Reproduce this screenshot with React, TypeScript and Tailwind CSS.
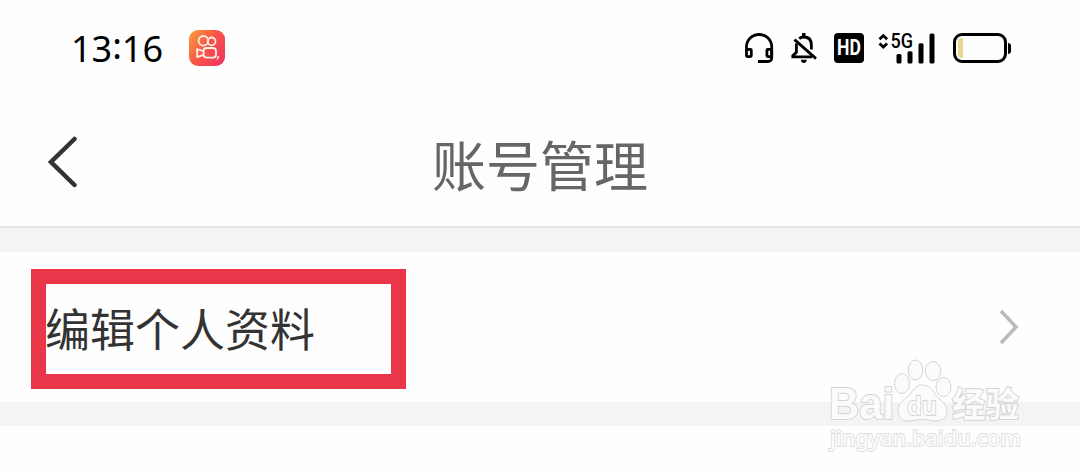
function AppBadge() {
  return (
    <svg className="h-9 w-9" viewBox="0 0 36 36" fill="none">
      <defs>
        <linearGradient id="badge" x1="0" y1="0.1" x2="1" y2="0.8">
          <stop offset="0" stopColor="#f99a3c" />
          <stop offset="0.5" stopColor="#fa5548" />
          <stop offset="1" stopColor="#f0365c" />
        </linearGradient>
      </defs>
      <rect width="36" height="36" rx="9" fill="url(#badge)" />
      <g stroke="#fff0e6" strokeWidth="1.8">
        <circle cx="14.4" cy="10.8" r="4.8" />
        <circle cx="22.6" cy="11.4" r="3.9" />
        <rect x="14.6" y="18" width="12.4" height="9.6" rx="3" />
        <path d="M14 21l-5.800-2v8.200l5.800-2" strokeLinejoin="round" />
      </g>
      <path d="M27.800 26.800h1.800l-1.400 3" stroke="#ffe3dc" strokeWidth="1.2" />
    </svg>
  );
}

function Headset() {
  return (
    <svg className="h-[30px] w-[29px]" viewBox="0 0 29 30" fill="none" stroke="#000" strokeWidth="2.8">
      <path d="M1.500 18v-4.200a12.600 12.300 0 0 1 25.200 0V24.500q0 4-4 4H13" />
      <rect x="1.500" y="16.400" width="4.800" height="7.200" rx="1" />
      <rect x="21.900" y="16.400" width="4.800" height="7.200" rx="1" />
    </svg>
  );
}

function BellOff() {
  return (
    <svg className="h-[30px] w-[26px]" viewBox="0 0 26 30" fill="none" stroke="#000" strokeWidth="2.8">
      <path d="M8.200 5.600q2-1.600 4.600-1.600 7.600 0 7.600 8v4.600" />
      <path d="M5.400 10.500v8.800L1.800 22.600v1.200H21" />
      <path d="M3.500 6.600L25 25.600" />
      <path d="M12.800 0v4" strokeWidth="3.4" />
      <path d="M9.800 26.800h6q-.5 3.200-3 3.200t-3-3.200z" fill="#000" stroke="none" />
    </svg>
  );
}

function Signal() {
  return (
    <svg className="h-[31px] w-[58px] overflow-visible" viewBox="0 0 58 31" fill="none">
      <path d="M1.500 6.200l3.800-3.600 3.800 3.600M1.500 10.400l3.800 3.600 3.800-3.600" stroke="#000" strokeWidth="2.8" />
      <text
        x="12.5"
        y="15"
        textLength="22.5"
        lengthAdjust="spacingAndGlyphs"
        className="font-['Roboto'] text-[20px] font-medium"
        fill="#000"
      >
        5G
      </text>
      <rect x="18.500" y="21" width="5" height="9.500" rx="1.500" fill="#000" />
      <rect x="29.500" y="18.300" width="5" height="12.200" rx="1.500" fill="#000" />
      <rect x="40.500" y="10.300" width="5" height="20.200" rx="1.500" fill="#000" />
      <rect x="51.500" y="0.500" width="5" height="30" rx="1.500" fill="#000" />
    </svg>
  );
}

function Battery() {
  return (
    <div className="flex items-center">
      <div className="h-[30px] w-[54px] rounded-[9px] border-3 border-black p-[2px]">
        <div className="h-full w-[5px] rounded-l-[4px] rounded-r-[1px] bg-[#ecd68c]" />
      </div>
      <div className="ml-px h-[11px] w-[3px] rounded-r-sm bg-black" />
    </div>
  );
}

function Watermark() {
  return (
    <svg
      className="absolute left-[820px] top-[350px] h-[110px] w-[210px]"
      viewBox="0 0 210 110"
      fill="#fbfbfb"
      stroke="#d4d4d4"
      strokeWidth="1"
    >
      <text
        x="9"
        y="69"
        textLength="65"
        lengthAdjust="spacingAndGlyphs"
        strokeWidth="2"
        strokeLinejoin="round"
        paintOrder="stroke"
        className="font-['Liberation_Sans'] text-[45px] font-bold"
      >
        Bai
      </text>
      <ellipse cx="82" cy="33.500" rx="7.500" ry="10" />
      <ellipse cx="95.500" cy="20" rx="7.200" ry="10" />
      <ellipse cx="113" cy="21" rx="7.800" ry="9.500" />
      <ellipse cx="123.500" cy="37" rx="7.500" ry="9.500" />
      <path d="M102 35c7 0 10 4 13 9s12 9 12 17c0 7-5 10-11 10-5 0-8-1.500-14-1.500s-9 1.500-14 1.500c-6 0-10-4-10-11 0-8 8-11 12-16s6-9 12-9z" />
      <text
        x="87"
        y="64.500"
        textLength="30"
        lengthAdjust="spacingAndGlyphs"
        strokeWidth="1.8"
        paintOrder="stroke"
        className="font-['Noto_Sans'] text-[26px] font-semibold"
      >
        du
      </text>
      <text
        x="132"
        y="67"
        textLength="67"
        lengthAdjust="spacingAndGlyphs"
        strokeWidth="2"
        paintOrder="stroke"
        className="font-['Noto_Sans_CJK_SC'] text-[34px] font-bold"
      >
        经验
      </text>
      <text
        x="10"
        y="95.500"
        textLength="191"
        lengthAdjust="spacingAndGlyphs"
        stroke="#dedede"
        strokeWidth="1.8"
        paintOrder="stroke"
        className="font-['Noto_Sans'] text-[22px] font-medium"
      >
        jingyan.baidu.com
      </text>
    </svg>
  );
}

export default function App() {
  return (
    <main className="relative h-[475px] w-[1080px] overflow-hidden bg-[#fefefe] font-['Noto_Sans_CJK_SC',sans-serif]">
      <div className="flex h-24 items-center justify-between pl-[71px] pr-[69px]">
        <div className="flex items-center">
          <div className="flex w-[118px] pt-px font-['Noto_Sans'] text-[36px] leading-none text-black">
            13<span className="-mt-[3px]">:</span>16
          </div>
          <AppBadge />
        </div>
        <div className="flex items-center">
          <Headset />
          <div className="ml-[17px]">
            <BellOff />
          </div>
          <div className="ml-[17px] flex h-[30px] w-[30px] items-center justify-center rounded-[4px] bg-black font-['Roboto'] text-[22px] leading-none font-bold text-white">
            <span className="scale-x-80">HD</span>
          </div>
          <div className="ml-[14px]">
            <Signal />
          </div>
          <div className="ml-[17px]">
            <Battery />
          </div>
        </div>
      </div>

      <header className="grid h-33 grid-cols-[1fr_auto_1fr] items-center border-b-2 border-[#e2e2e2] pl-12">
        <svg className="mt-0.5 h-[52px] w-[30px]" viewBox="0 0 30 52" fill="none">
          <path d="M26.500 3L3 26l23.500 23" stroke="#333" strokeWidth="4.500" strokeLinecap="round" />
        </svg>
        <h1 className="mr-12 pt-1.5 text-[54px] leading-none text-[#666]">账号管理</h1>
      </header>

      <div className="h-6 bg-[#f4f4f4]" />

      <div className="flex h-[150px] items-center justify-between pl-[31px] pr-[61px]">
        <div className="mt-1 flex h-[120px] w-[375px] items-center border-15 border-[#e93649] pb-1 text-[45px] leading-none text-[#333]">
          <span className="-ml-px">编辑个人资料</span>
        </div>
        <svg className="h-9 w-5" viewBox="0 0 20 36" fill="none">
          <path d="M2 2l15 16L2 34" stroke="#bbb" strokeWidth="3.500" />
        </svg>
      </div>

      <div className="h-6 bg-[#f4f4f4]" />
      <Watermark />
    </main>
  );
}
